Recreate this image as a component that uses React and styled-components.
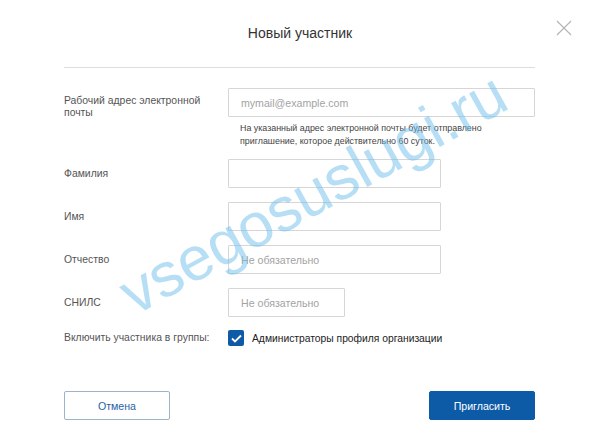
import styled, { createGlobalStyle } from 'styled-components';

const GlobalStyle = createGlobalStyle`
  html, body {
    margin: 0;
    padding: 0;
    background: #fff;
  }
  body {
    font-family: "Liberation Sans", Arial, sans-serif;
  }
`;

const Modal = styled.div`
  position: relative;
  width: 600px;
  height: 447px;
  background: #fff;
  overflow: hidden;
`;
const Header = styled.div`
  height: 67px;
  display: flex;
  align-items: center;
  justify-content: center;
`;
const Title = styled.h1`
  margin: 0;
  padding-bottom: 1px;
  font-size: 14px;
  font-weight: normal;
  color: #333;
`;
const Close = styled.button`
  position: absolute;
  top: 18px;
  right: 26px;
  width: 20px;
  height: 20px;
  padding: 0;
  border: none;
  background: none;
  display: flex;
  align-items: center;
  justify-content: center;
`;
const Divider = styled.hr`
  margin: 0 65px 0 64px;
  border: none;
  border-top: 1px solid #ddd;
`;
const Form = styled.div`
  padding: 20px 65px 0 64px;
  display: flex;
  flex-direction: column;
`;
const Row = styled.div`
  display: grid;
  grid-template-columns: 164px 1fr;
  align-items: ${(p) => (p.$top ? 'start' : 'center')};
  margin-bottom: ${(p) => (p.$gap === undefined ? 14 : p.$gap)}px;
`;
const Label = styled.div`
  font-size: 10.4px;
  line-height: 12px;
  color: #555;
  padding-top: ${(p) => p.$pt || 0}px;
`;
const Input = styled.input`
  box-sizing: border-box;
  width: ${(p) => p.$w}px;
  height: 29px;
  padding: 0 12px;
  border: 1px solid #d6d6d6;
  border-radius: 1px;
  font-family: inherit;
  font-size: 10.6px;
  color: #333;
  outline: none;
  &::placeholder {
    color: #a3a3a3;
  }
`;
const Hint = styled.p`
  margin: 5px 0 0;
  padding-left: 12px;
  font-size: 8.9px;
  line-height: 13px;
  color: #444;
`;
const Check = styled.label`
  display: flex;
  align-items: center;
  gap: 8px;
  font-size: 10.3px;
  color: #222;
`;
const Box = styled.span`
  width: 16px;
  height: 16px;
  border-radius: 2px;
  background: #0d5aa7;
  display: flex;
  align-items: center;
  justify-content: center;
`;
const Actions = styled.div`
  display: flex;
  justify-content: space-between;
  padding: 45px 65px 0 64px;
`;
const Button = styled.button`
  box-sizing: border-box;
  width: 106px;
  height: 29px;
  border-radius: 2px;
  font-family: inherit;
  font-size: 10.6px;
  border: 1px solid ${(p) => (p.$primary ? '#0d5aa7' : '#9db3c9')};
  background: ${(p) => (p.$primary ? '#0d5aa7' : '#fff')};
  color: ${(p) => (p.$primary ? '#fff' : '#1f63a8')};
`;
const Watermark = styled.span`
  position: absolute;
  left: 135px;
  top: 264px;
  font-size: 62px;
  line-height: 1;
  color: rgba(110, 190, 236, 0.5);
  white-space: nowrap;
  transform-origin: 0 52.5px;
  transform: rotate(-29deg);
  pointer-events: none;
`;

const fields = [
  { label: 'Фамилия', w: 213 },
  { label: 'Имя', w: 213 },
  { label: 'Отчество', w: 213, ph: 'Не обязательно' },
  { label: 'СНИЛС', w: 117, ph: 'Не обязательно' },
];

const App = () => {
  return (
    <Modal>
      <GlobalStyle />
      <Header>
        <Title>Новый участник</Title>
      </Header>
      <Close aria-label="Закрыть">
        <svg width="16" height="16" viewBox="0 0 16 16">
          <path d="M1 1 L15 15 M15 1 L1 15" stroke="#b5b5b5" strokeWidth="1.2" fill="none" />
        </svg>
      </Close>
      <Divider />
      <Form>
        <Row $top $gap={11}>
          <Label $pt={7}>Рабочий адрес электронной<br />почты</Label>
          <div>
            <Input $w={307} placeholder="mymail@example.com" />
            <Hint>
              На указанный адрес электронной почты будет отправлено<br />
              приглашение, которое действительно 60 суток.
            </Hint>
          </div>
        </Row>
        {fields.map((f, i) => (
          <Row key={f.label} $gap={i === 3 ? 13 : 14}>
            <Label>{f.label}</Label>
            <Input $w={f.w} placeholder={f.ph} />
          </Row>
        ))}
        <Row $gap={0}>
          <Label>Включить участника в группы:</Label>
          <Check>
            <Box>
              <svg width="11" height="9" viewBox="0 0 11 9">
                <path d="M1 4.5 L4 7.5 L10 1.5" stroke="#fff" strokeWidth="1.8" fill="none" />
              </svg>
            </Box>
            Администраторы профиля организации
          </Check>
        </Row>
      </Form>
      <Actions>
        <Button>Отмена</Button>
        <Button $primary>Пригласить</Button>
      </Actions>
      <Watermark>vsegosuslugi.ru</Watermark>
    </Modal>
  );
};

export default App;
